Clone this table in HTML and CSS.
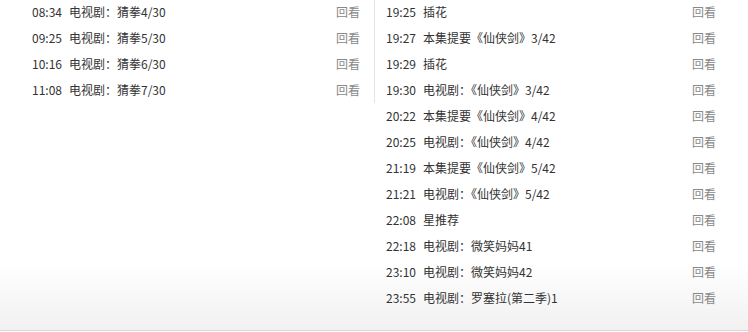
FILE: index.html
```html
<!DOCTYPE html>
<html lang="zh-CN">
<head>
    <meta charset="UTF-8">
    <meta name="viewport" content="width=device-width, initial-scale=1.0">
    <title>节目单</title>
    <link rel="stylesheet" href="styles.css">
</head>
<body>

    <div class="schedule">
        <ul class="col col-left">
            <li><span class="time">08:34</span><span class="name">电视剧：猜拳4/30</span><a class="replay">回看</a></li>
            <li><span class="time">09:25</span><span class="name">电视剧：猜拳5/30</span><a class="replay">回看</a></li>
            <li><span class="time">10:16</span><span class="name">电视剧：猜拳6/30</span><a class="replay">回看</a></li>
            <li><span class="time">11:08</span><span class="name">电视剧：猜拳7/30</span><a class="replay">回看</a></li>
        </ul>
        <ul class="col col-right">
            <li><span class="time">19:25</span><span class="name">插花</span><a class="replay">回看</a></li>
            <li><span class="time">19:27</span><span class="name">本集提要《仙侠剑》3/42</span><a class="replay">回看</a></li>
            <li><span class="time">19:29</span><span class="name">插花</span><a class="replay">回看</a></li>
            <li><span class="time">19:30</span><span class="name">电视剧：《仙侠剑》3/42</span><a class="replay">回看</a></li>
            <li><span class="time">20:22</span><span class="name">本集提要《仙侠剑》4/42</span><a class="replay">回看</a></li>
            <li><span class="time">20:25</span><span class="name">电视剧：《仙侠剑》4/42</span><a class="replay">回看</a></li>
            <li><span class="time">21:19</span><span class="name">本集提要《仙侠剑》5/42</span><a class="replay">回看</a></li>
            <li><span class="time">21:21</span><span class="name">电视剧：《仙侠剑》5/42</span><a class="replay">回看</a></li>
            <li><span class="time">22:08</span><span class="name">星推荐</span><a class="replay">回看</a></li>
            <li><span class="time">22:18</span><span class="name">电视剧：微笑妈妈41</span><a class="replay">回看</a></li>
            <li><span class="time">23:10</span><span class="name">电视剧：微笑妈妈42</span><a class="replay">回看</a></li>
            <li><span class="time">23:55</span><span class="name">电视剧：罗塞拉(第二季)1</span><a class="replay">回看</a></li>
        </ul>
    </div>

</body>
</html>
```

FILE: styles.css
```css
body {
    margin: 0;
    font-family: "Noto Sans CJK SC", "Noto Sans", sans-serif;
    font-size: 12px;
    color: #333;
    background: #fff;
}
.schedule {
    display: flex;
    align-items: flex-start;
    width: 748px;
    height: 330px;
    border-bottom: 1px solid #d6d6d6;
    background: linear-gradient(to bottom, #fff 262px, #f1f1f1 330px);
}
.col {
    list-style: none;
    margin: -1px 0 0;
    padding: 0;
}
.col li {
    display: flex;
    height: 26px;
    line-height: 26px;
}
.col-left {
    width: 328px;
    padding: 0 14px 0 32px;
    border-right: 1px solid #e4e4e4;
}
.col-right {
    width: 330px;
    padding: 0 0 0 11px;
}
.time {
    width: 37px;
}
.name {
    flex: 1;
}
.replay {
    color: #888;
}
```
